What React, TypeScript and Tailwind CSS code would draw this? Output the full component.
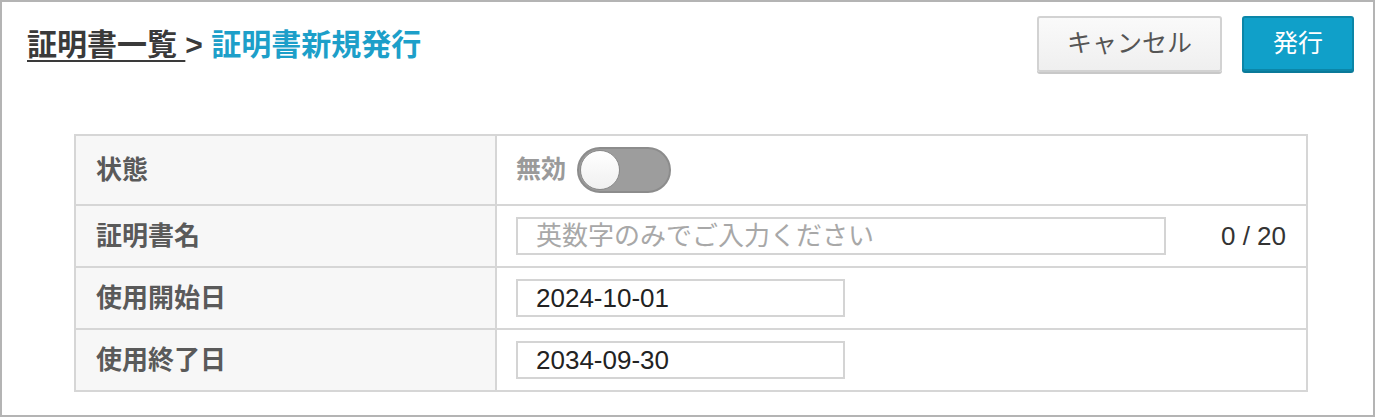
import React, { useState } from 'react';

const font = { fontFamily: '"Liberation Sans", "Noto Sans CJK JP", sans-serif' };

function Toggle({ on }: { on: boolean }) {
  return (
    <div
      className={`relative h-[46px] w-[94px] rounded-full border-2 ${
        on ? 'border-[#0b86a8] bg-[#12a0c8]' : 'border-[#8c8c8c] bg-[#9d9d9d]'
      }`}
    >
      <div
        className={`absolute top-[1px] h-[40px] w-[40px] rounded-full border border-[#8a8a8a] bg-gradient-to-b from-white to-[#f0f0f0] ${
          on ? 'right-[1px]' : 'left-[1px]'
        }`}
      />
    </div>
  );
}

export default function App() {
  const [name] = useState('');
  const [active] = useState(false);

  const rows = [
    { label: '状態', h: 'h-[68px]' },
    { label: '証明書名', h: 'h-[62px]' },
    { label: '使用開始日', h: 'h-[62px]' },
    { label: '使用終了日', h: 'h-[62px]' },
  ];

  const cell = (i: number) => {
    if (i === 0)
      return (
        <div className="flex items-center gap-[11px]">
          <span className="text-[25px] font-bold text-[#9a9a9a]">{active ? '有効' : '無効'}</span>
          <Toggle on={active} />
        </div>
      );
    if (i === 1)
      return (
        <div className="flex w-full items-center justify-between pr-[20px]">
          <input
            className="h-[38px] w-[650px] border-2 border-[#d4d4d4] px-[18px] text-[26px] text-[#222] placeholder:text-[#a8a8a8] outline-none"
            placeholder="英数字のみでご入力ください"
            value={name}
            readOnly
          />
          <span className="text-[26px] text-[#333]">{name.length} / 20</span>
        </div>
      );
    return (
      <input
        className="h-[38px] w-[329px] border-2 border-[#d4d4d4] px-[18px] text-[26px] text-[#222] outline-none"
        value={i === 2 ? '2024-10-01' : '2034-09-30'}
        readOnly
      />
    );
  };

  return (
    <div style={font} className="h-[418px] w-[1376px] bg-white">
      <div className="h-[417px] w-[1375px] border-2 border-[#b4b4b4]">
        {/* header */}
        <div className="flex items-center justify-between pl-[25px] pr-[19px] pt-[14px]">
          <div className="flex items-center text-[30px] font-bold">
            <a className="text-[#3a3a3a] underline underline-offset-[5px] decoration-2">証明書一覧&nbsp;</a>
            <span className="text-[#3a3a3a]">&gt;&nbsp;</span>
            <span className="text-[#1d9fc9]">証明書新規発行</span>
          </div>
          <div className="flex gap-[20px]">
            <button className="h-[56px] w-[185px] rounded-[3px] border-2 border-[#d2d2d2] bg-gradient-to-b from-[#fafafa] to-[#efefef] text-[25px] text-[#555] shadow-[0_2px_0_#c8c8c8]">
              キャンセル
            </button>
            <button className="h-[55px] w-[112px] rounded-[3px] border-2 border-[#0b86a8] bg-[#10a0c9] text-[25px] text-white shadow-[0_2px_0_#0a7a99]">
              発行
            </button>
          </div>
        </div>

        {/* form table */}
        <div className="ml-[72px] mt-[62px] w-[1234px] border-2 border-[#d6d6d6]">
          {rows.map((r, i) => (
            <div
              key={r.label}
              className={`flex ${r.h} ${i > 0 ? 'border-t-2 border-[#d6d6d6]' : ''}`}
            >
              <div className="flex w-[421px] items-center border-r-2 border-[#d6d6d6] bg-[#f7f7f7] pl-[20px] text-[26px] font-bold text-[#5a5a5a]">
                {r.label}
              </div>
              <div className="flex flex-1 items-center pl-[19px]">{cell(i)}</div>
            </div>
          ))}
        </div>
      </div>
    </div>
  );
}
